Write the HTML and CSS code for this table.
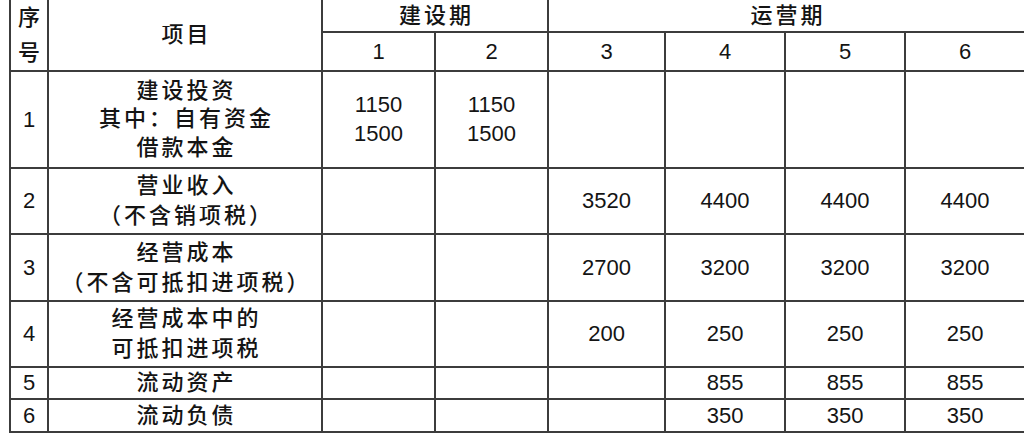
FILE: index.html
```html
<!DOCTYPE html>
<html lang="zh-CN">
<head>
<meta charset="utf-8">
<title>项目投资数据表</title>
<link rel="stylesheet" href="styles.css">
</head>
<body>
<table class="grid">
  <colgroup>
    <col class="c-no">
    <col class="c-item">
    <col class="c-y1">
    <col class="c-y2">
    <col class="c-y3">
    <col class="c-y4">
    <col class="c-y5">
    <col class="c-y6">
  </colgroup>
  <tr class="h1">
    <td rowspan="2" class="cn tall">序<br>号</td>
    <td rowspan="2" class="cn">项目</td>
    <td colspan="2" class="cn">建设期</td>
    <td colspan="4" class="cn">运营期</td>
  </tr>
  <tr class="h2">
    <td>1</td><td>2</td><td>3</td><td>4</td><td>5</td><td>6</td>
  </tr>
  <tr class="r1">
    <td>1</td>
    <td class="cn multi">建设投资<br>其中：自有资金<br>借款本金</td>
    <td class="multi">1150<br>1500</td>
    <td class="multi">1150<br>1500</td>
    <td></td><td></td><td></td><td></td>
  </tr>
  <tr class="r2">
    <td>2</td>
    <td class="cn two">营业收入<br>（不含销项税）</td>
    <td></td><td></td>
    <td>3520</td><td>4400</td><td>4400</td><td>4400</td>
  </tr>
  <tr class="r3">
    <td>3</td>
    <td class="cn two">经营成本<br>（不含可抵扣进项税）</td>
    <td></td><td></td>
    <td>2700</td><td>3200</td><td>3200</td><td>3200</td>
  </tr>
  <tr class="r4">
    <td>4</td>
    <td class="cn two">经营成本中的<br>可抵扣进项税</td>
    <td></td><td></td>
    <td>200</td><td>250</td><td>250</td><td>250</td>
  </tr>
  <tr class="r5">
    <td>5</td>
    <td class="cn">流动资产</td>
    <td></td><td></td><td></td>
    <td>855</td><td>855</td><td>855</td>
  </tr>
  <tr class="r6">
    <td>6</td>
    <td class="cn">流动负债</td>
    <td></td><td></td><td></td>
    <td>350</td><td>350</td><td>350</td>
  </tr>
</table>
</body>
</html>
```

FILE: styles.css
```css
html, body {
  margin: 0;
  padding: 0;
  background: #ffffff;
  overflow: hidden;
}

body {
  font-family: "Liberation Sans", "Noto Sans CJK SC", sans-serif;
  color: #141414;
}

.grid {
  border-collapse: collapse;
  table-layout: fixed;
  width: 917px;
  margin: -2px 0 0 9px;
}

.grid td {
  border: 2px solid #3c3c3c;
  padding: 0;
  text-align: center;
  vertical-align: middle;
  font-size: 22px;
  line-height: 26px;
}

.c-no { width: 38px; }
.c-item { width: 274px; }
.c-y1 { width: 113px; }
.c-y2 { width: 113px; }
.c-y3 { width: 117px; }
.c-y4 { width: 120px; }
.c-y5 { width: 120px; }
.c-y6 { width: 120px; }

.cn {
  font-weight: 500;
  letter-spacing: 3px;
  padding-left: 3px !important;
}

.grid td.tall {
  line-height: 35px;
  letter-spacing: 0;
  padding-left: 0 !important;
}

.grid td.multi {
  line-height: 28.5px;
}

.grid td.two {
  line-height: 30px;
}

.h1 { height: 33px; }
.h2 { height: 38px; }
.r1 { height: 97px; }
.r2 { height: 66px; }
.r3 { height: 67px; }
.r4 { height: 66px; }
.r5 { height: 32px; }
.r6 { height: 33px; }
```
